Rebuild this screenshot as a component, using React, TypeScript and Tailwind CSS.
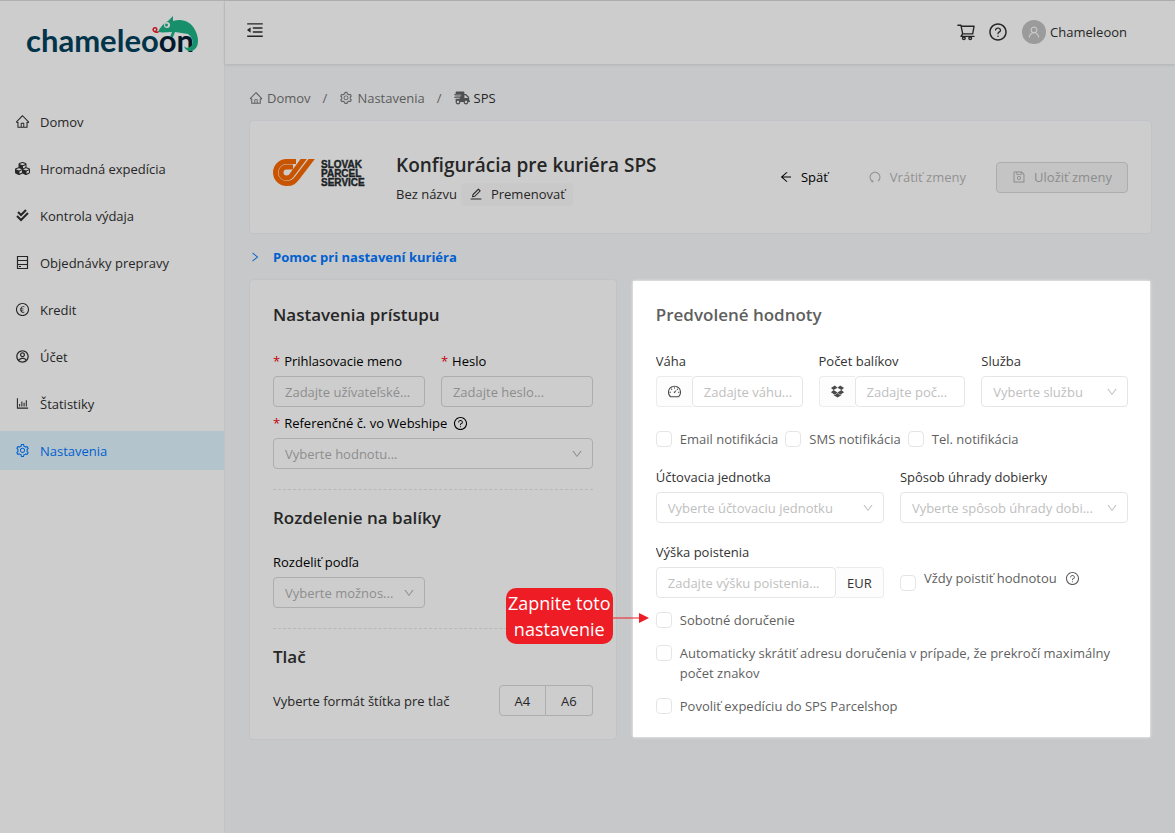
import type { ReactNode } from "react";
import {
  AiOutlineArrowLeft,
  AiOutlineBarChart,
  AiOutlineDashboard,
  AiOutlineDown,
  AiOutlineDropbox,
  AiOutlineEdit,
  AiOutlineEuroCircle,
  AiOutlineHome,
  AiOutlineMenuFold,
  AiOutlineQuestionCircle,
  AiOutlineRight,
  AiOutlineSave,
  AiOutlineSetting,
  AiOutlineShoppingCart,
  AiOutlineUndo,
  AiOutlineUser,
} from "react-icons/ai";
import { FaCubes, FaShippingFast } from "react-icons/fa";
import { RiAccountCircleLine } from "react-icons/ri";

interface IconProps {
  className?: string;
}

const DoubleCheckIcon: React.FC<IconProps> = ({ className }) => (
  <svg viewBox="0 0 15 15" className={className} fill="none" stroke="currentColor" strokeWidth="2">
    <path d="M3 4l3 3 5-5" />
    <path d="M2 8l4 4 7-7" />
  </svg>
);

const RackIcon: React.FC<IconProps> = ({ className }) => (
  <svg viewBox="0 0 15 15" className={className} fill="none" stroke="currentColor" strokeWidth="1.200">
    <path d="M2.500 1.500h10v12h-10zM2.500 5.500h10M2.500 9.500h10" />
    <path d="M4 11.500h2" strokeWidth="1" />
  </svg>
);

interface NavItem {
  label: string;
  icon: React.ComponentType<IconProps>;
  active?: boolean;
}

const navItems: NavItem[] = [
  { label: "Domov", icon: AiOutlineHome },
  { label: "Hromadná expedícia", icon: FaCubes },
  { label: "Kontrola výdaja", icon: DoubleCheckIcon },
  { label: "Objednávky prepravy", icon: RackIcon },
  { label: "Kredit", icon: AiOutlineEuroCircle },
  { label: "Účet", icon: RiAccountCircleLine },
  { label: "Štatistiky", icon: AiOutlineBarChart },
  { label: "Nastavenia", icon: AiOutlineSetting, active: true },
];

const Logo = () => (
  <svg viewBox="0 0 180 50" className="h-[50px] w-[180px]" role="img" aria-label="chameleoon">
    <text x="1" y="37" fontFamily="Lato, sans-serif" fontWeight="700" fontSize="31" fill="#01344a">
      chameleo<tspan fill="#04182b">on</tspan>
    </text>
    <path
      d="M133 17C135 12 139 8 143 6L148 1V6C158 3 166 7 170 15C174 22 174 31 170 34C166 38 160 36 159 31C161 34 165 33 167 30C169 27 167 22 163 19L150 17L148 22L145 22L147 17C142 17 138 18 133 17Z"
      fill="#178f6b"
    />
    <circle cx="142" cy="10" r="3" fill="#cdcdcd" />
    <circle cx="141.500" cy="10" r="1.500" fill="#178f6b" />
    <path d="M133 17c-4 1-6-2-4-4 2-1 4 1 2 3" fill="none" stroke="#c4121f" strokeWidth="1.500" strokeLinecap="round" />
  </svg>
);

const SpsLogo = () => (
  <svg viewBox="0 0 94 30" className="h-[30px] w-[94px]" role="img" aria-label="Slovak Parcel Service">
    <clipPath id="sps-mark">
      <path d="M0 1h48v28H0z" />
    </clipPath>
    <g clipPath="url(#sps-mark)" fill="none" stroke="#c85400" strokeWidth="5">
      <path d="M24 3.500h-9.500a11 11 0 0 0 0 22c6 0 8-2 11-6L42-2" />
      <path d="M21 9h-6.500a5.500 5.500 0 0 0 0 11c3 0 5-2 6-4L34-2" />
    </g>
    <g fontFamily="'Liberation Sans', sans-serif" fontWeight="700" fontSize="10" fill="#1c2426" stroke="#1c2426" strokeWidth="0.400">
      <text x="49" y="10">SLOVAK</text>
      <text x="49" y="19">PARCEL</text>
      <text x="49" y="28">SERVICE</text>
    </g>
  </svg>
);

interface FieldProps {
  id: string;
  label: string;
  required?: boolean;
  help?: boolean;
  className?: string;
  children: ReactNode;
}

const Field: React.FC<FieldProps> = ({ id, label, required, help, className = "", children }) => (
  <div className={`min-w-0 ${className}`}>
    <div className="mb-1 flex h-[22px] items-center">
      {required && <span className="mr-1 text-[#c4000a]">*</span>}
      <label htmlFor={id} className="truncate">{label}</label>
      {help && <AiOutlineQuestionCircle className="ml-1.5 size-[15px] shrink-0" />}
    </div>
    {children}
  </div>
);

interface ControlProps {
  id: string;
  placeholder: string;
  dim?: boolean;
  type?: string;
}

const TextInput: React.FC<ControlProps> = ({ id, placeholder, dim, type = "text" }) => (
  <input
    id={id}
    type={type}
    placeholder={placeholder}
    className={`h-[31px] w-full min-w-0 rounded border pr-1 pl-[11px] text-ellipsis outline-none ${
      dim ? "border-[#adadad] placeholder:text-[#8e8e8e]" : "border-[#e5e5e5] placeholder:text-[#c0c0c0]"
    }`}
  />
);

const Select: React.FC<ControlProps> = ({ id, placeholder, dim }) => (
  <div className="relative">
    <select
      id={id}
      className={`block h-[31px] w-full appearance-none truncate rounded border pr-7 pl-[11px] outline-none ${
        dim ? "border-[#adadad] text-[#8e8e8e]" : "border-[#e5e5e5] text-[#c0c0c0]"
      }`}
    >
      <option>{placeholder}</option>
    </select>
    <AiOutlineDown className={`pointer-events-none absolute top-[10px] right-[10px] size-3 ${dim ? "text-[#8e8e8e]" : "text-[#bdbdbd]"}`} />
  </div>
);

const Check: React.FC<{ id: string; children: ReactNode }> = ({ id, children }) => (
  <div className="flex items-start gap-2 leading-5 text-[#5f5f5f]">
    <input id={id} type="checkbox" className="mt-[2px] size-4 shrink-0 appearance-none rounded border border-[#e5e5e5]" />
    <label htmlFor={id}>{children}</label>
  </div>
);

const Callout = () => (
  <div className="absolute top-[-22px] right-full mr-[7px] flex items-center">
    <div className="w-[107px] rounded-[10px] bg-[#ee1c25] py-[2px] text-center text-lg leading-[26px] whitespace-nowrap text-white">
      Zapnite toto
      <br />
      nastavenie
    </div>
    <svg viewBox="0 0 36 12" className="mt-1 h-3 w-9">
      <path d="M0 6h28" stroke="#ee1c25" />
      <path d="M26 1l10 5-10 5z" fill="#ee1c25" />
    </svg>
  </div>
);

const Sidebar = () => (
  <aside className="w-[225px] shrink-0 border-r border-[#c1c2c4] bg-[#cdcdcd]">
    <a href="#" className="block h-[101px] pt-[14px] pl-[25px]">
      <Logo />
    </a>
    <nav className="flex flex-col gap-2">
      {navItems.map(({ label, icon: Icon, active }) => (
        <a
          key={label}
          href="#"
          className={`flex h-[39px] items-center gap-2.5 pl-[15px] ${active ? "bg-[#b3c4cc] text-[#0060cf]" : "text-[#262626]"}`}
        >
          <Icon className="size-[15px] shrink-0" />
          {label}
        </a>
      ))}
    </nav>
  </aside>
);

const Header = () => (
  <header className="flex h-[63px] items-center justify-between bg-[#cdcdcd] pr-12 pb-[2px] pl-5 shadow-[0_1px_3px_rgba(0,21,41,0.12)]">
    <button type="button" aria-label="Menu" className="-mt-1">
      <AiOutlineMenuFold className="size-5" />
    </button>
    <div className="flex items-center">
      <button type="button" aria-label="Košík">
        <AiOutlineShoppingCart className="size-5" />
      </button>
      <button type="button" aria-label="Pomoc" className="ml-3">
        <AiOutlineQuestionCircle className="size-5" />
      </button>
      <a href="#" className="ml-3.5 flex items-center gap-1">
        <span className="flex size-6 items-center justify-center rounded-full bg-[#9b9b9b] text-[#cdcdcd]">
          <AiOutlineUser className="size-3.5" />
        </span>
        Chameleoon
      </a>
    </div>
  </header>
);

const Breadcrumb = () => (
  <nav aria-label="Breadcrumb" className="flex h-[22px] items-center text-[#5c5c5c]">
    <a href="#" className="flex items-center gap-1">
      <AiOutlineHome className="size-3.5" /> Domov
    </a>
    <span className="mx-3">/</span>
    <a href="#" className="flex items-center gap-1">
      <AiOutlineSetting className="size-3.5" /> Nastavenia
    </a>
    <span className="mx-3">/</span>
    <span className="flex items-center gap-1 text-[#262626]">
      <FaShippingFast className="size-4 text-[#4f4f4f]" /> SPS
    </span>
  </nav>
);

const TitleCard = () => (
  <section className="mt-[11px] flex h-[114px] items-center rounded-sm border border-[#c0c3c8] bg-[#cdcdcd] pr-[23px] pl-[22px]">
    <div className="-mt-2 w-[124px] shrink-0">
      <SpsLogo />
    </div>
    <div className="mt-[2px] grow">
      <h1 className="text-[19px] leading-7 font-semibold whitespace-nowrap">Konfigurácia pre kuriéra SPS</h1>
      <div className="mt-1 flex items-center gap-1">
        Bez názvu
        <button type="button" className="flex h-[23px] items-center gap-2 rounded bg-[#c9c9c9] px-2">
          <AiOutlineEdit className="size-3.5" /> Premenovať
        </button>
      </div>
    </div>
    <div className="flex shrink-0 items-center">
      <button type="button" className="flex items-center gap-2 text-black">
        <AiOutlineArrowLeft className="size-3.5" /> Späť
      </button>
      <button type="button" disabled className="ml-10 flex items-center gap-2 text-[#929292]">
        <AiOutlineUndo className="size-3.5" /> Vrátiť zmeny
      </button>
      <button type="button" disabled className="ml-[30px] flex h-[31px] w-[132px] items-center justify-center gap-2 rounded border border-[#adadad] bg-[#c4c4c4] text-[#8c8c8c]">
        <AiOutlineSave className="size-3.5" /> Uložiť zmeny
      </button>
    </div>
  </section>
);

const AccessCard = () => (
  <section className="rounded-sm border border-[#c0c3c8] bg-[#cdcdcd] p-[23px] text-black">
    <h2 className="text-[17px] leading-6 font-semibold text-[#262626]">Nastavenia prístupu</h2>
    <div className="mt-[23px] grid grid-cols-2 gap-x-4 gap-y-[5px]">
      <Field id="login" label="Prihlasovacie meno" required>
        <TextInput id="login" placeholder="Zadajte užívateľské..." dim />
      </Field>
      <Field id="password" label="Heslo" required>
        <TextInput id="password" type="password" placeholder="Zadajte heslo..." dim />
      </Field>
      <Field id="reference" label="Referenčné č. vo Webshipe" required help className="col-span-2">
        <Select id="reference" placeholder="Vyberte hodnotu..." dim />
      </Field>
    </div>

    <hr className="mt-5 mb-4 border-dashed border-[#b8b8b8]" />
    <h2 className="text-[17px] leading-6 font-semibold text-[#262626]">Rozdelenie na balíky</h2>
    <div className="mt-[21px] grid grid-cols-2 gap-x-4">
      <Field id="split" label="Rozdeliť podľa">
        <Select id="split" placeholder="Vyberte možnos..." dim />
      </Field>
    </div>

    <hr className="mt-5 mb-4 border-dashed border-[#b8b8b8]" />
    <h2 className="text-[17px] leading-6 font-semibold text-[#262626]">Tlač</h2>
    <div className="mt-4 flex items-center justify-between text-[#262626]">
      Vyberte formát štítka pre tlač
      <div className="flex">
        <button type="button" className="h-[31px] w-[47px] rounded-l border border-[#adadad]">A4</button>
        <button type="button" className="h-[31px] w-[47px] rounded-r border border-l-0 border-[#adadad]">A6</button>
      </div>
    </div>
  </section>
);

const DefaultsCard = () => (
  <section className="mt-[2px] mr-[2px] bg-white pt-[22px] pr-[22px] pb-[21px] pl-[23px] text-[#333] shadow-[0_0_3px_rgba(255,255,255,0.8)]">
    <h2 className="text-[17px] leading-6 font-semibold text-[#5f5f5f]">Predvolené hodnoty</h2>
    <div className="mt-[23px] grid grid-cols-3 gap-4">
      <Field id="weight" label="Váha">
        <div className="flex">
          <span className="flex w-9 shrink-0 items-center justify-center rounded-l border border-r-0 border-[#ececec] bg-[#fdfdfd] text-[#4a4a4a]">
            <AiOutlineDashboard className="size-[15px]" />
          </span>
          <TextInput id="weight" placeholder="Zadajte váhu..." />
        </div>
      </Field>
      <Field id="count" label="Počet balíkov">
        <div className="flex">
          <span className="flex w-9 shrink-0 items-center justify-center rounded-l border border-r-0 border-[#ececec] bg-[#fdfdfd] text-[#4a4a4a]">
            <AiOutlineDropbox className="size-[15px]" />
          </span>
          <TextInput id="count" placeholder="Zadajte poč..." />
        </div>
      </Field>
      <Field id="service" label="Služba">
        <Select id="service" placeholder="Vyberte službu" />
      </Field>
    </div>

    <div className="mt-[22px] flex gap-[7px] whitespace-nowrap">
      <Check id="email">Email notifikácia</Check>
      <Check id="sms">SMS notifikácia</Check>
      <Check id="phone">Tel. notifikácia</Check>
    </div>

    <div className="mt-[17px] grid grid-cols-2 gap-x-4 gap-y-[18px]">
      <Field id="unit" label="Účtovacia jednotka">
        <Select id="unit" placeholder="Vyberte účtovaciu jednotku" />
      </Field>
      <Field id="cod" label="Spôsob úhrady dobierky">
        <Select id="cod" placeholder="Vyberte spôsob úhrady dobi..." />
      </Field>
      <Field id="insurance" label="Výška poistenia">
        <div className="flex">
          <TextInput id="insurance" placeholder="Zadajte výšku poistenia..." />
          <span className="flex w-12 shrink-0 items-center justify-center rounded-r border border-l-0 border-[#ececec] bg-[#fdfdfd]">EUR</span>
        </div>
      </Field>
      <div className="flex items-start gap-2 pt-[27px] leading-5 text-[#5f5f5f]">
        <input id="always" type="checkbox" className="mt-[7px] size-4 shrink-0 appearance-none rounded border border-[#e5e5e5]" />
        <label htmlFor="always" className="flex items-center whitespace-nowrap">
          Vždy poistiť hodnotou <AiOutlineQuestionCircle className="ml-2 size-[15px]" />
        </label>
      </div>
    </div>

    <div className="mt-3 flex flex-col gap-[13px]">
      <div className="relative">
        <Check id="saturday">Sobotné doručenie</Check>
        <Callout />
      </div>
      <Check id="shorten">Automaticky skrátiť adresu doručenia v prípade, že prekročí maximálny počet znakov</Check>
      <Check id="parcelshop">Povoliť expedíciu do SPS Parcelshop</Check>
    </div>
  </section>
);

export default function App() {
  return (
    <div className="flex min-h-screen border-t border-[#b0b0b0] bg-[#c7c8ca] font-['Open_Sans','Noto_Sans',sans-serif] text-[13px] leading-[22px] text-[#262626]">
      <Sidebar />
      <div className="min-w-0 grow">
        <Header />
        <main className="pt-[23px] pr-[23px] pb-6 pl-6">
          <Breadcrumb />
          <TitleCard />
          <button type="button" className="mt-3 flex items-center gap-3 font-bold text-[#0060cf]">
            <AiOutlineRight className="size-3" /> Pomoc pri nastavení kuriéra
          </button>
          <div className="mt-[11px] grid grid-cols-[17fr_24fr] items-start gap-4">
            <AccessCard />
            <DefaultsCard />
          </div>
        </main>
      </div>
    </div>
  );
}
